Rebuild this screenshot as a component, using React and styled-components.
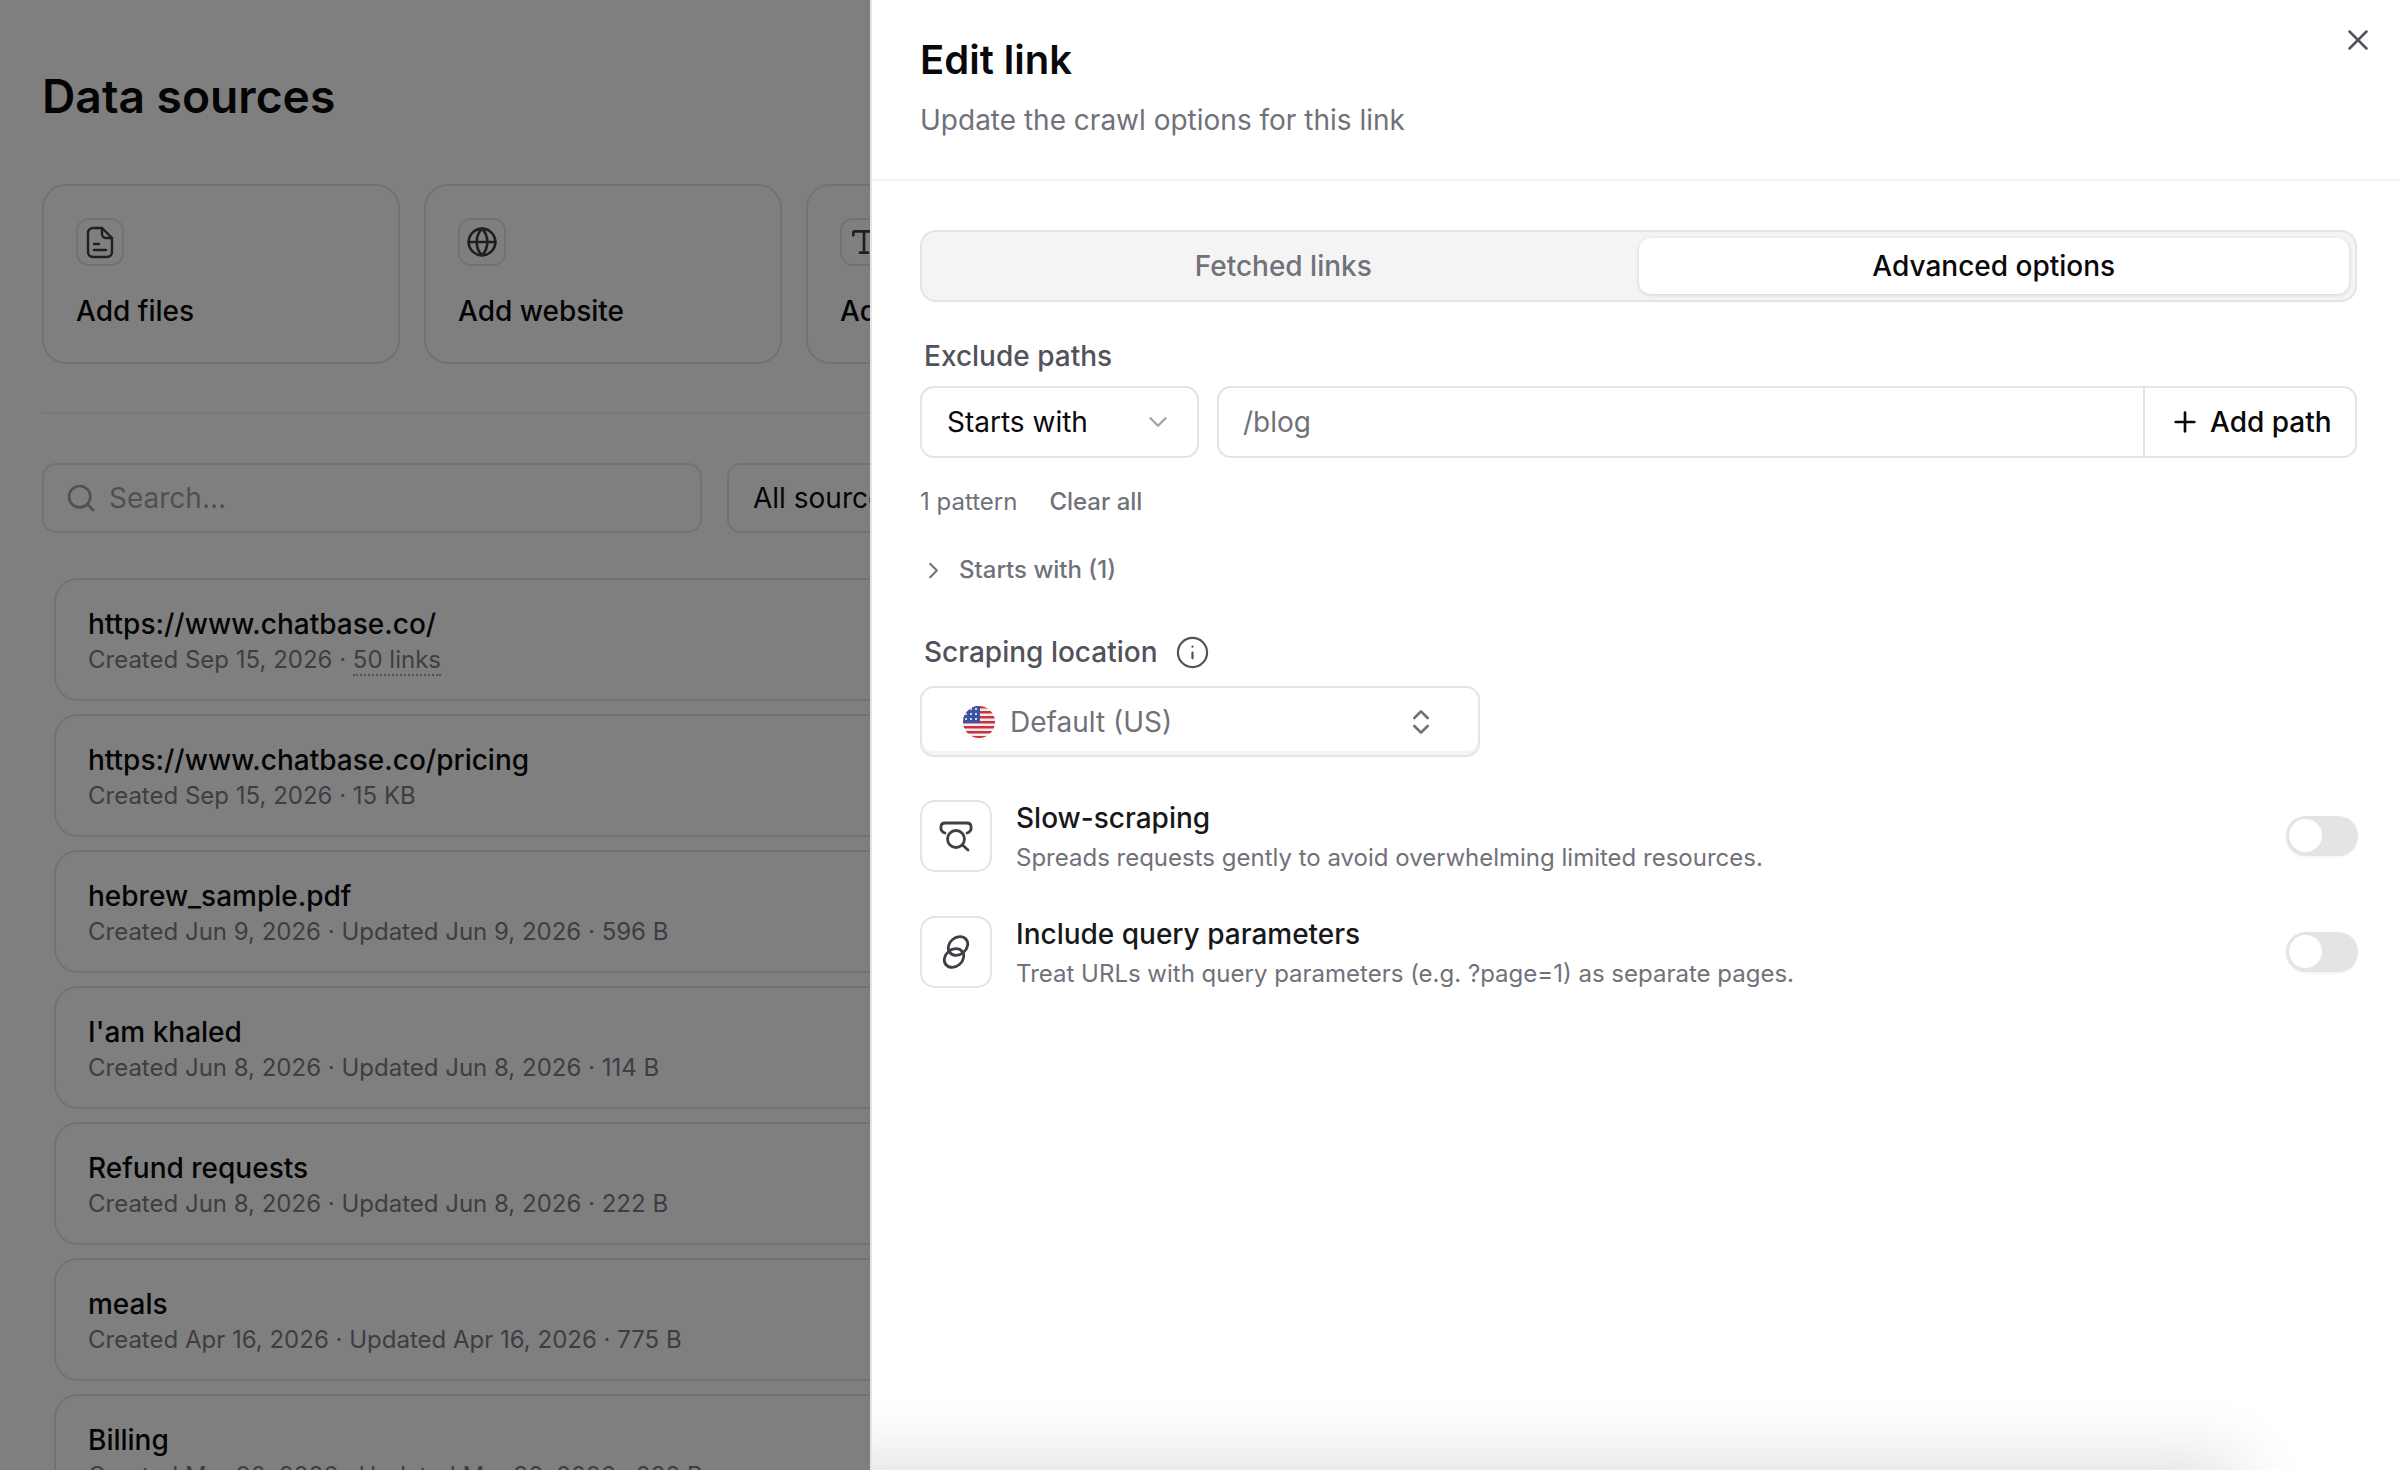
import React from "react";
import styled, { createGlobalStyle } from "styled-components";
import { ChevronDown, ChevronRight, ChevronsUpDown, Globe, Info, Plus, Search, Type, X } from "lucide-react";

const GlobalStyle = createGlobalStyle`
    * { box-sizing: border-box; }
    html, body { margin: 0; padding: 0; background: #fff; }
    body { font-family: Inter, "Noto Sans", sans-serif; color: #09090b; }
`;

const Screen = styled.div`
    position: relative;
    width: 2400px;
    height: 1470px;
    overflow: hidden;
`;

const Page = styled.main`
    height: 100%;
    padding: 72px 0 0 42px;
    overflow: hidden;
`;

const PageTitle = styled.h1`
    margin: 0;
    font-size: 46.2px;
    line-height: 48px;
    font-weight: 600;
`;

const CardRow = styled.div`
    display: flex;
    gap: 24px;
    margin-top: 64px;
`;

const ActionCard = styled.div`
    flex: 0 0 358px;
    height: 180px;
    padding: 32px;
    border: 2px solid #e4e4e7;
    border-radius: 24px;
`;

const CardIcon = styled.div`
    display: flex;
    align-items: center;
    justify-content: center;
    width: 48px;
    height: 48px;
    border: 2px solid #e4e4e7;
    border-radius: 13px;
    color: #3f3f46;
`;

const CardLabel = styled.div`
    margin-top: 27px;
    font-size: 28px;
    line-height: 36px;
    font-weight: 500;
`;

const Rule = styled.hr`
    margin: 48px 0 0;
    border: 0;
    border-top: 2px solid #f0f0f1;
`;

const FilterRow = styled.div`
    display: flex;
    gap: 25px;
    margin-top: 49px;
`;

const SearchBox = styled.div`
    display: flex;
    align-items: center;
    gap: 12px;
    flex: 0 0 660px;
    height: 70px;
    padding-left: 21px;
    border: 2px solid #e4e4e7;
    border-radius: 14px;
    font-size: 28px;
    color: #a1a1aa;
`;

const FilterSelect = styled.div`
    display: flex;
    align-items: center;
    flex: 0 0 400px;
    height: 70px;
    padding-left: 24px;
    border: 2px solid #e4e4e7;
    border-radius: 14px;
    font-size: 28px;
    white-space: nowrap;
`;

const SourceList = styled.div`
    display: flex;
    flex-direction: column;
    gap: 13px;
    margin: 45px 0 0 12px;
`;

const SourceRow = styled.div`
    flex: 0 0 123px;
    padding: 26px 32px 23px;
    border: 2px solid #e4e4e7;
    border-radius: 24px;
`;

const SourceName = styled.div`
    font-size: 28px;
    line-height: 36px;
    font-weight: 500;
`;

const SourceMeta = styled.div`
    font-size: 24px;
    line-height: 32px;
    margin-top: 2px;
    color: #7c7c85;
    span { border-bottom: 2px dotted #a1a1aa; }
`;

const Backdrop = styled.div`
    position: absolute;
    inset: 0;
    background: rgba(0, 0, 0, 0.5);
`;

const Drawer = styled.aside`
    position: absolute;
    top: 0;
    right: 0;
    bottom: 0;
    width: 1530px;
    overflow: hidden;
    background: #fff;
    border-left: 2px solid #e4e4e7;
`;

const DrawerHeader = styled.header`
    height: 181px;
    padding: 38px 0 0 48px;
    border-bottom: 2px solid #f4f4f5;
`;

const DrawerTitle = styled.h2`
    margin: 0;
    font-size: 40px;
    line-height: 44px;
    font-weight: 600;
`;

const DrawerText = styled.p`
    margin: 20px 0 0;
    font-size: 28px;
    line-height: 36px;
    color: #71717a;
`;

const CloseButton = styled.button`
    position: absolute;
    top: 20px;
    right: 22px;
    width: 40px;
    height: 40px;
    padding: 0;
    display: flex;
    align-items: center;
    justify-content: center;
    border: 0;
    background: none;
    color: #52525b;
`;

const DrawerBody = styled.div`
    padding: 49px 43px 0 48px;
`;

const TabList = styled.div`
    display: flex;
    height: 72px;
    padding: 6px;
    background: #f4f4f5;
    border: 2px solid #e4e4e7;
    border-radius: 16px;
`;

const Tab = styled.div`
    flex: 1;
    display: flex;
    align-items: center;
    justify-content: center;
    border-radius: 12px;
    font-size: 28px;
    font-weight: 500;
    color: ${props => (props.active ? "#09090b" : "#71717a")};
    background: ${props => (props.active ? "#fff" : "transparent")};
    box-shadow: ${props => (props.active ? "0 1px 4px rgba(0, 0, 0, 0.14)" : "none")};
`;

const FieldLabel = styled.div`
    display: flex;
    align-items: center;
    gap: 17px;
    margin: ${props => props.top}px 0 0 4px;
    font-size: 28px;
    line-height: 36px;
    font-weight: 500;
    color: #52525b;
`;

const PathRow = styled.div`
    display: flex;
    gap: 18px;
    height: 72px;
    margin-top: 12px;
`;

const TypeSelect = styled.div`
    flex: 0 0 279px;
    display: flex;
    align-items: center;
    justify-content: space-between;
    padding: 0 24px 0 25px;
    border: 2px solid #e4e4e7;
    border-radius: 14px;
    font-size: 28px;
    color: #a1a1aa;
    span { color: #09090b; }
`;

const PathGroup = styled.div`
    flex: 1;
    display: flex;
    border: 2px solid #e4e4e7;
    border-radius: 14px;
`;

const PathInput = styled.div`
    flex: 1;
    display: flex;
    align-items: center;
    padding-left: 24px;
    font-size: 28px;
    color: #71717a;
`;

const AddButton = styled.div`
    flex: 0 0 212px;
    display: flex;
    align-items: center;
    gap: 9px;
    padding-left: 24px;
    border-left: 2px solid #e4e4e7;
    font-size: 28px;
    font-weight: 500;
`;

const PatternRow = styled.div`
    display: flex;
    gap: 32px;
    margin-top: 28px;
    font-size: 24px;
    line-height: 32px;
    color: #71717a;
    b { font-weight: 500; color: #71717a; }
`;

const GroupToggle = styled.div`
    display: flex;
    align-items: center;
    gap: 12px;
    margin-top: 36px;
    font-size: 24px;
    line-height: 32px;
    font-weight: 500;
    color: #71717a;
`;

const LocationSelect = styled.div`
    display: flex;
    align-items: center;
    width: 560px;
    height: 71px;
    margin-top: 16px;
    padding: 0 41px;
    border: 2px solid #e4e4e7;
    border-radius: 14px;
    box-shadow: inset 0 -4px 0 #f4f4f5;
    font-size: 28px;
    color: #71717a;
    span { flex: 1; margin-left: 15px; }
`;

const OptionList = styled.div`
    display: flex;
    flex-direction: column;
    gap: 44px;
    margin-top: 43px;
`;

const OptionRow = styled.div`
    display: flex;
    align-items: center;
    gap: 24px;
    height: 72px;
`;

const OptionIcon = styled.div`
    flex: 0 0 72px;
    height: 72px;
    display: flex;
    align-items: center;
    justify-content: center;
    border: 2px solid #e4e4e7;
    border-radius: 15px;
    color: #3f3f46;
`;

const OptionText = styled.div`
    flex: 1;
    padding-top: 2px;
`;

const OptionTitle = styled.div`
    font-size: 28px;
    line-height: 36px;
    font-weight: 500;
    color: #18181b;
`;

const OptionHint = styled.div`
    margin-top: 6px;
    font-size: 24px;
    line-height: 32px;
    color: #71717a;
`;

const Switch = styled.div`
    width: 72px;
    height: 40px;
    margin-right: -1px;
    padding: 3px;
    border-radius: 20px;
    background: #e4e4e7;
    box-shadow: 0 1px 3px rgba(0, 0, 0, 0.06);
    &::before {
        content: "";
        display: block;
        width: 33px;
        height: 33px;
        border-radius: 50%;
        background: #fff;
    }
`;

const FooterShadow = styled.div`
    position: absolute;
    left: -60px;
    right: 170px;
    bottom: -50px;
    height: 50px;
    box-shadow: 0 0 70px 10px rgba(0, 0, 0, 0.14);
`;

const sources = [
    { name: "https://www.chatbase.co/", meta: "Created Sep 15, 2026 · ", links: "50 links" },
    { name: "https://www.chatbase.co/pricing", meta: "Created Sep 15, 2026 · 15 KB" },
    { name: "hebrew_sample.pdf", meta: "Created Jun 9, 2026 · Updated Jun 9, 2026 · 596 B" },
    { name: "I'am khaled", meta: "Created Jun 8, 2026 · Updated Jun 8, 2026 · 114 B" },
    { name: "Refund requests", meta: "Created Jun 8, 2026 · Updated Jun 8, 2026 · 222 B" },
    { name: "meals", meta: "Created Apr 16, 2026 · Updated Apr 16, 2026 · 775 B" },
    { name: "Billing", meta: "Created Mar 30, 2026 · Updated Mar 30, 2026 · 232 B" },
];

const UsFlag = () => (
    <svg width="32" height="32" viewBox="0 0 32 32">
        <defs>
            <clipPath id="flagClip"><circle cx="16" cy="16" r="16" /></clipPath>
        </defs>
        <g clipPath="url(#flagClip)">
            <rect width="32" height="32" fill="#eee" />
            {[0, 5, 10, 15, 20, 25, 30].map(y => <rect key={y} y={y} width="32" height="2.5" fill="#d32f3a" />)}
            <rect width="17" height="17" fill="#3b53a4" />
            {[3, 8, 13].map(y => [3, 8, 13].map(x => <circle key={x + "-" + y} cx={x} cy={y} r="1" fill="#fff" />))}
        </g>
    </svg>
);

const FileIcon = () => (
    <svg width="34" height="34" viewBox="0 0 34 34" fill="none" stroke="currentColor" strokeWidth="2.4" strokeLinecap="round" strokeLinejoin="round">
        <path d="M10 3 H19 L29 13 V27 a5 5 0 0 1 -5 5 H10 a5 5 0 0 1 -5 -5 V8 a5 5 0 0 1 5 -5 Z" />
        <path d="M19 3 V9 a4 4 0 0 0 4 4 H29" />
        <path d="M11 19 H16" />
        <path d="M11 25 H23" />
    </svg>
);

const SlowScrapeIcon = () => (
    <svg width="36" height="36" viewBox="0 0 36 36" fill="none" stroke="currentColor" strokeWidth="2.8" strokeLinecap="round" strokeLinejoin="round">
        <path d="M7 15 C3.5 14 2.5 11 3 8 C3.3 5.5 5 5 7 5 H29 C31 5 32.7 5.5 33 8 C33.5 11 32.5 14 29 15" />
        <circle cx="18" cy="21" r="8.5" />
        <path d="M24.5 27 L30 32" />
    </svg>
);

const LinkedIcon = () => (
    <svg width="36" height="36" viewBox="0 0 36 36" fill="none" stroke="currentColor" strokeWidth="2.8" strokeLinecap="round">
        <ellipse cx="20" cy="12" rx="10.5" ry="8.5" transform="rotate(-40 20 12)" />
        <ellipse cx="16" cy="24" rx="10.5" ry="8.5" transform="rotate(-40 16 24)" />
    </svg>
);

const App = () => (
    <Screen>
        <GlobalStyle />
        <Page>
            <PageTitle>Data sources</PageTitle>
            <CardRow>
                <ActionCard>
                    <CardIcon><FileIcon /></CardIcon>
                    <CardLabel>Add files</CardLabel>
                </ActionCard>
                <ActionCard>
                    <CardIcon><Globe size={32} strokeWidth={2} /></CardIcon>
                    <CardLabel>Add website</CardLabel>
                </ActionCard>
                <ActionCard>
                    <CardIcon><Type size={32} strokeWidth={2} /></CardIcon>
                    <CardLabel>Add text</CardLabel>
                </ActionCard>
            </CardRow>
            <Rule />
            <FilterRow>
                <SearchBox><Search size={32} strokeWidth={2} />Search...</SearchBox>
                <FilterSelect>All sources</FilterSelect>
            </FilterRow>
            <SourceList>
                {sources.map(source => (
                    <SourceRow key={source.name}>
                        <SourceName>{source.name}</SourceName>
                        <SourceMeta>{source.meta}{source.links && <span>{source.links}</span>}</SourceMeta>
                    </SourceRow>
                ))}
            </SourceList>
        </Page>
        <Backdrop />
        <Drawer>
            <DrawerHeader>
                <DrawerTitle>Edit link</DrawerTitle>
                <DrawerText>Update the crawl options for this link</DrawerText>
            </DrawerHeader>
            <CloseButton><X size={34} strokeWidth={1.8} /></CloseButton>
            <DrawerBody>
                <TabList>
                    <Tab>Fetched links</Tab>
                    <Tab active>Advanced options</Tab>
                </TabList>
                <FieldLabel top={36}>Exclude paths</FieldLabel>
                <PathRow>
                    <TypeSelect><span>Starts with</span><ChevronDown size={30} strokeWidth={1.8} /></TypeSelect>
                    <PathGroup>
                        <PathInput>/blog</PathInput>
                        <AddButton><Plus size={32} strokeWidth={2} />Add path</AddButton>
                    </PathGroup>
                </PathRow>
                <PatternRow>1 pattern<b>Clear all</b></PatternRow>
                <GroupToggle><ChevronRight size={27} strokeWidth={1.8} />Starts with (1)</GroupToggle>
                <FieldLabel top={48}>Scraping location<Info size={35} strokeWidth={1.5} /></FieldLabel>
                <LocationSelect>
                    <UsFlag />
                    <span>Default (US)</span>
                    <ChevronsUpDown size={32} strokeWidth={2} />
                </LocationSelect>
                <OptionList>
                    <OptionRow>
                        <OptionIcon><SlowScrapeIcon /></OptionIcon>
                        <OptionText>
                            <OptionTitle>Slow-scraping</OptionTitle>
                            <OptionHint>Spreads requests gently to avoid overwhelming limited resources.</OptionHint>
                        </OptionText>
                        <Switch />
                    </OptionRow>
                    <OptionRow>
                        <OptionIcon><LinkedIcon /></OptionIcon>
                        <OptionText>
                            <OptionTitle>Include query parameters</OptionTitle>
                            <OptionHint>Treat URLs with query parameters (e.g. ?page=1) as separate pages.</OptionHint>
                        </OptionText>
                        <Switch />
                    </OptionRow>
                </OptionList>
            </DrawerBody>
            <FooterShadow />
        </Drawer>
    </Screen>
);

export default App;
